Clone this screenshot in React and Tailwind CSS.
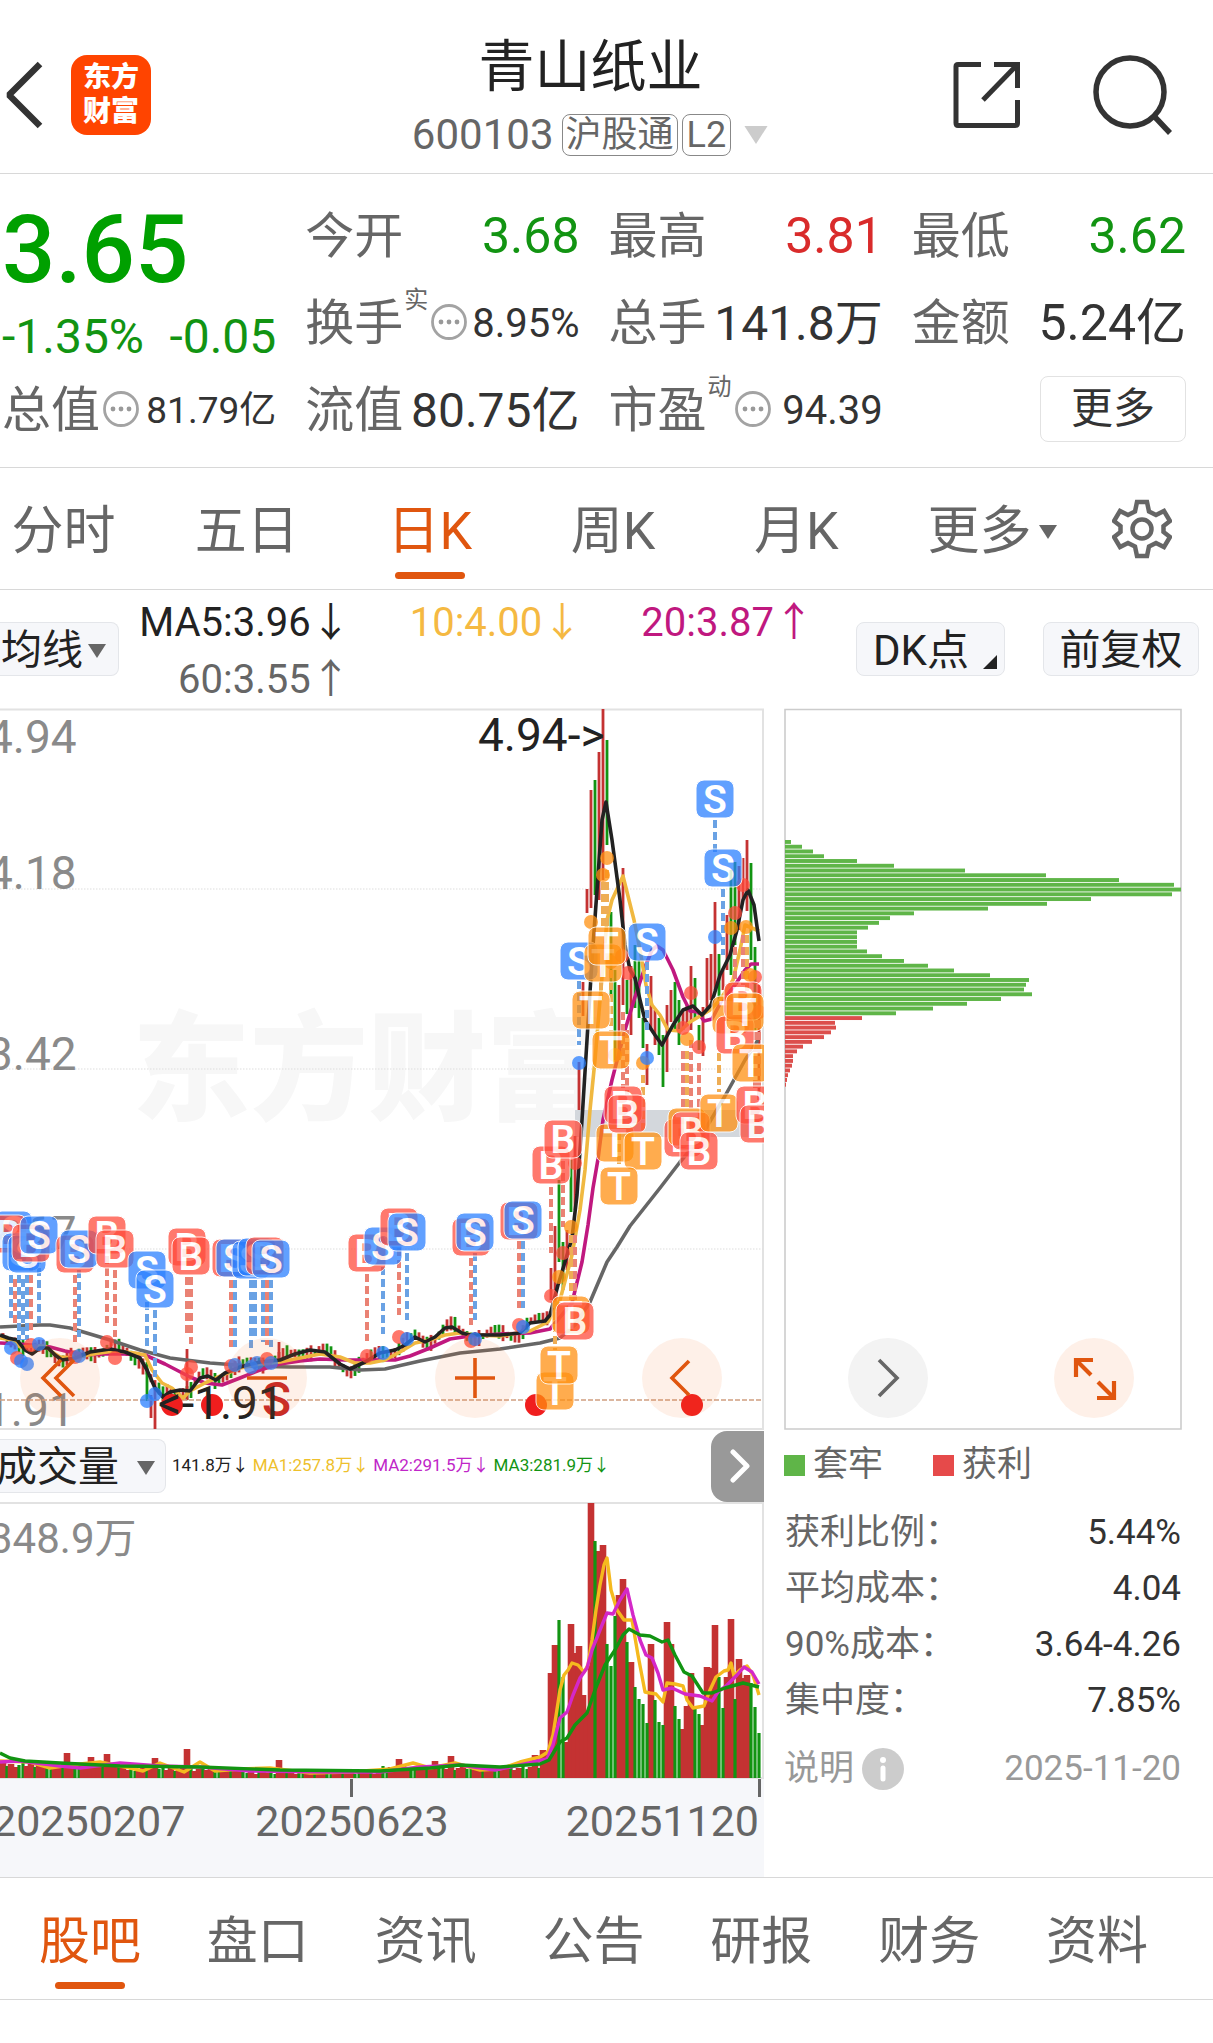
import { useState } from "react";

const PERIODS = ["分时", "五日", "日K", "周K", "月K", "更多"];
const SECTIONS = ["股吧", "盘口", "资讯", "公告", "研报", "财务", "资料"];

const COLORS = {
  up: "#c43232",
  down: "#129412",
  S: "#2a7fff",
  B: "#ff4a3a",
  T: "#ff9010",
};

const STEM_COLORS = { S: "#6aa2e4", B: "#ea8274", T: "#eead55" };

// 均线: 每一项为 [x, y]
const MA_LINES = [
  {
    color: "#666666",
    points:
      "0,1327 40,1325 50,1325 70,1328 110,1340 140,1350 170,1358 210,1363 250,1366 290,1367 330,1367 360,1370 385,1369 420,1361 460,1353 500,1349 540,1343 560,1338 575,1325 590,1302 607,1262 617,1247 630,1226 645,1207 660,1188 680,1162 700,1138 712,1118 725,1096 735,1078 745,1060 758,1040",
  },
  {
    color: "#c0187f",
    points:
      "0,1343 20,1344 50,1347 65,1351 85,1355 105,1354 125,1354 145,1355 165,1364 190,1377 205,1383 222,1385 240,1378 260,1370 280,1364 300,1361 320,1359 345,1360 370,1360 395,1360 410,1356 430,1348 450,1339 470,1336 500,1334 530,1333 550,1329 572,1303 582,1262 588,1225 593,1188 598,1159 603,1120 612,1080 625,1030 635,997 645,967 652,950 657,946 663,950 673,970 683,997 690,1011 698,1012 704,1021 712,1019 722,1000 735,985 745,970 751,964 759,964",
  },
  {
    color: "#f0b840",
    points:
      "0,1338 12,1340 20,1347 35,1346 45,1346 52,1352 60,1357 75,1358 88,1355 100,1353 115,1351 125,1352 135,1353 145,1355 152,1370 162,1383 172,1388 183,1398 190,1391 205,1383 225,1374 240,1368 260,1364 280,1362 300,1358 320,1354 340,1357 355,1363 370,1363 385,1360 400,1352 415,1343 430,1340 445,1335 460,1333 475,1335 500,1336 530,1331 548,1322 560,1300 572,1255 580,1210 585,1170 590,1110 595,1060 600,1000 607,920 612,900 623,876 634,920 640,950 646,985 652,1005 660,1015 668,1030 680,1031 690,1022 710,1010 720,1000 733,980 740,950 745,925 752,928 759,931",
  },
  {
    color: "#222222",
    points:
      "0,1335 8,1338 17,1340 25,1350 32,1354 40,1348 48,1348 55,1355 62,1360 75,1358 90,1352 110,1349 125,1352 140,1358 147,1370 155,1388 163,1397 170,1392 180,1390 190,1391 200,1378 208,1376 216,1380 225,1373 240,1367 260,1362 280,1360 295,1354 310,1350 325,1352 340,1364 350,1369 365,1362 380,1353 395,1350 405,1345 415,1337 425,1342 435,1337 445,1328 452,1327 462,1333 470,1335 500,1335 520,1333 530,1323 545,1321 550,1315 558,1285 565,1262 572,1238 577,1195 582,1120 587,1040 592,960 597,890 602,820 606,802 612,840 620,900 625,945 630,970 635,978 640,1000 645,1020 655,1035 662,1045 673,1025 683,1010 693,1006 702,1015 711,1005 720,975 730,955 737,930 743,900 748,890 754,905 759,941",
  },
];

// 拉升之后的 K 线: [x, 最高, 最低, 涨1/跌0]
const CANDLES = [
  [551, 1268, 1300, 1], [555, 1226, 1290, 1], [559, 1180, 1262, 0], [563, 1242, 1290, 0],
  [567, 1230, 1270, 1], [571, 1160, 1212, 0], [575, 1136, 1210, 1], [579, 1062, 1110, 1],
  [583, 982, 1016, 1], [587, 889, 913, 1], [591, 790, 908, 1], [595, 780, 895, 0],
  [599, 752, 900, 1], [603, 709, 880, 1], [607, 740, 845, 0], [611, 912, 1000, 0],
  [615, 970, 1060, 0], [619, 985, 1060, 1], [623, 868, 1005, 1], [627, 980, 1014, 0],
  [631, 966, 1035, 1], [635, 945, 1008, 0], [639, 960, 1018, 0], [643, 1018, 1048, 0],
  [647, 1044, 1085, 1], [651, 976, 1030, 1], [655, 1010, 1045, 1], [659, 1018, 1055, 0],
  [663, 1035, 1087, 0], [667, 1005, 1072, 1], [671, 990, 1022, 1], [675, 982, 1030, 0],
  [679, 1000, 1045, 0], [683, 1010, 1030, 1], [687, 1005, 1024, 1], [691, 966, 1030, 1],
  [695, 978, 1020, 0], [699, 1025, 1050, 0], [703, 1007, 1056, 1], [707, 958, 1010, 1],
  [711, 954, 1000, 1], [715, 902, 990, 1], [719, 954, 1000, 0], [723, 970, 990, 1],
  [727, 915, 970, 1], [731, 870, 975, 0], [735, 862, 945, 0], [739, 866, 930, 1],
  [743, 858, 900, 1], [747, 840, 911, 1], [751, 863, 960, 0], [755, 947, 1030, 0],
  [759, 985, 1100, 1],
];

// 横盘区间的 K 线, 围绕 MA5 展开
const BASE_PATH = MA_LINES[3].points
  .split(" ")
  .map((p) => p.split(",").map(Number))
  .filter(([x]) => x <= 550);

const baseAt = (x) => {
  const i = BASE_PATH.findIndex((p) => p[0] >= x);
  if (i <= 0) return BASE_PATH[0][1];
  const [x0, y0] = BASE_PATH[i - 1];
  const [x1, y1] = BASE_PATH[i];
  return y0 + ((y1 - y0) * (x - x0)) / (x1 - x0);
};

const EARLY_CANDLES = Array.from({ length: 137 }, (_, i) => {
  const x = 3 + i * 4;
  const y = baseAt(x) + Math.sin(i * 0.6) * 4;
  const size = 3 + ((i * 7) % 6);
  return [x, y - size, y + size, (i * 5) % 7 < 4 ? 1 : 0];
}).concat([
  [147, 1362, 1401, 0],
  [151, 1395, 1418, 1],
  [155, 1390, 1429, 1],
  [187, 1349, 1400, 1],
  [279, 1342, 1366, 1],
]);

// 买卖点连线: [x, 起, 止, 类型]
const STEMS = [
  [11, 1275, 1318, "S"], [15, 1279, 1323, "B"], [19, 1275, 1340, "S"], [23, 1279, 1340, "S"],
  [27, 1275, 1340, "S"], [31, 1263, 1330, "B"], [39, 1256, 1323, "S"], [75, 1275, 1342, "B"],
  [79, 1270, 1337, "S"], [107, 1256, 1323, "B"], [115, 1270, 1337, "B"], [147, 1302, 1346, "S"],
  [155, 1310, 1377, "S"], [187, 1277, 1337, "B"], [191, 1277, 1344, "B"], [231, 1280, 1347, "B"],
  [235, 1280, 1347, "S"], [251, 1280, 1348, "S"], [255, 1280, 1340, "S"], [263, 1280, 1342, "S"],
  [267, 1280, 1345, "B"], [271, 1280, 1347, "S"], [367, 1274, 1341, "B"], [383, 1267, 1334, "S"],
  [399, 1248, 1315, "B"], [407, 1253, 1320, "S"], [471, 1258, 1325, "B"], [475, 1253, 1320, "S"],
  [519, 1241, 1308, "B"], [523, 1241, 1308, "S"], [551, 1187, 1253, "B"], [563, 1161, 1227, "B"],
  [571, 1235, 1300, "T"], [575, 1235, 1300, "B"], [555, 1300, 1350, "T"], [579, 981, 1045, "S"],
  [603, 882, 928, "T"], [607, 870, 928, "T"], [601, 982, 1000, "T"], [611, 970, 1031, "T"],
  [623, 1012, 1088, "B"], [627, 1030, 1095, "B"], [619, 1120, 1166, "T"], [643, 1075, 1130, "T"],
  [647, 962, 1030, "S"], [683, 1051, 1110, "B"], [687, 1051, 1108, "T"], [691, 1040, 1110, "B"],
  [699, 1063, 1130, "B"], [719, 1053, 1092, "T"], [715, 820, 852, "S"], [723, 889, 955, "S"],
  [735, 947, 985, "B"], [743, 935, 985, "B"], [747, 935, 1000, "T"], [755, 1020, 1090, "B"],
  [759, 1020, 1105, "B"],
];

const DOTS = [
  [11, 1348, "S"], [17, 1358, "B"], [21, 1361, "S"], [27, 1364, "S"], [31, 1345, "B"],
  [39, 1344, "S"], [75, 1357, "B"], [79, 1356, "S"], [107, 1342, "B"], [115, 1358, "B"],
  [147, 1401, "S"], [155, 1394, "S"], [187, 1374, "B"], [191, 1367, "B"], [231, 1366, "B"],
  [235, 1365, "S"], [251, 1367, "S"], [257, 1363, "S"], [267, 1359, "B"], [271, 1363, "S"],
  [367, 1356, "B"], [383, 1353, "S"], [399, 1337, "B"], [407, 1339, "S"], [471, 1341, "B"],
  [475, 1339, "S"], [519, 1325, "B"], [523, 1327, "S"], [551, 1296, "B"], [559, 1277, "T"],
  [563, 1253, "B"], [571, 1227, "T"], [575, 1163, "B"], [579, 1063, "S"], [591, 922, "T"],
  [603, 875, "T"], [607, 858, "T"], [611, 962, "T"], [622, 956, "B"], [628, 973, "B"],
  [615, 1055, "T"], [643, 1063, "T"], [647, 1058, "S"], [687, 1039, "T"], [699, 1047, "B"],
  [683, 1028, "B"], [691, 993, "B"], [715, 937, "S"], [731, 928, "T"], [735, 913, "B"],
  [743, 885, "B"], [746, 927, "T"], [755, 977, "B"], [750, 975, "T"], [759, 1012, "B"],
];

const MARKERS = [
  ["S", 13, 1230], ["B", 8, 1234], ["S", 21, 1252], ["S", 27, 1254], ["B", 31, 1243],
  ["S", 39, 1235], ["B", 75, 1254], ["S", 79, 1249], ["B", 107, 1235], ["B", 115, 1249],
  ["S", 147, 1270], ["S", 155, 1289], ["B", 187, 1247], ["B", 191, 1256], ["B", 231, 1258],
  ["S", 235, 1258], ["S", 251, 1260], ["S", 257, 1257], ["B", 265, 1256], ["S", 271, 1259],
  ["B", 367, 1253], ["S", 383, 1246], ["B", 399, 1227], ["S", 407, 1232], ["B", 471, 1237],
  ["S", 475, 1232], ["B", 519, 1221], ["S", 523, 1220], ["B", 551, 1165], ["B", 563, 1139],
  ["T", 571, 1315], ["B", 575, 1321], ["T", 555, 1391], ["T", 559, 1365], ["S", 579, 961],
  ["T", 603, 963], ["T", 607, 946], ["T", 591, 1010], ["S", 647, 942], ["T", 611, 1050],
  ["T", 615, 1143], ["B", 623, 1105], ["B", 627, 1114], ["T", 643, 1151], ["T", 619, 1186],
  ["B", 683, 1138], ["T", 687, 1127], ["B", 691, 1131], ["B", 699, 1151], ["T", 719, 1113],
  ["T", 731, 1015], ["B", 735, 1035], ["B", 743, 1001], ["T", 745, 1012], ["T", 751, 1063],
  ["B", 755, 1105], ["B", 759, 1124], ["S", 715, 799], ["S", 723, 868],
];

// 成交量: [x, 顶部, 涨1/跌0]
const VOLUMES = [
  [551, 1673, 1], [555, 1645, 1], [567, 1742, 1], [571, 1624, 1], [575, 1653, 1],
  [579, 1646, 1], [583, 1695, 1], [587, 1712, 1], [591, 1503, 1], [599, 1551, 1],
  [603, 1545, 1], [619, 1595, 1], [623, 1579, 1], [631, 1662, 1], [651, 1644, 1],
  [667, 1622, 1], [671, 1644, 1], [683, 1729, 1], [687, 1706, 1], [691, 1673, 1],
  [703, 1725, 1], [707, 1667, 1], [711, 1668, 1], [715, 1625, 1], [727, 1677, 1],
  [731, 1619, 1], [739, 1659, 1], [743, 1678, 1], [747, 1675, 1], [559, 1620, 0],
  [563, 1677, 0], [595, 1541, 0], [607, 1644, 0], [611, 1666, 0], [615, 1616, 0],
  [627, 1642, 0], [635, 1687, 0], [639, 1699, 0], [643, 1704, 0], [647, 1723, 0],
  [655, 1700, 0], [659, 1722, 0], [663, 1725, 0], [675, 1706, 0], [679, 1719, 0],
  [695, 1709, 0], [699, 1714, 0], [719, 1677, 0], [723, 1708, 0], [735, 1699, 0],
  [751, 1683, 0], [755, 1707, 0], [759, 1733, 0],
];

const SPIKES = { 67: 1753, 91: 1757, 107: 1754, 155: 1758, 187: 1749, 279: 1760, 399: 1759, 435: 1761, 451: 1756, 535: 1755, 543: 1750, 547: 1752 };

const EARLY_VOLUMES = Array.from({ length: 137 }, (_, i) => {
  const x = 3 + i * 4;
  const floor = x < 120 ? 1763 : x < 240 ? 1767 : x < 380 ? 1770 : 1766;
  const up = (i * 5) % 7 < 4 || SPIKES[x] ? 1 : 0;
  return [x, SPIKES[x] || floor + ((i * 3) % 5), up];
});

const VOLUME_LINES = [
  {
    color: "#f5b91e",
    points:
      "0,1761 30,1762 50,1768 70,1765 100,1762 130,1768 143,1771 160,1763 184,1772 200,1762 215,1771 240,1769 270,1768 310,1773 350,1772 390,1769 413,1763 430,1768 455,1763 480,1770 500,1769 520,1762 540,1757 548,1752 553,1735 560,1690 564,1675 568,1670 572,1663 578,1665 584,1672 588,1665 592,1640 596,1610 600,1585 604,1565 607,1558 611,1590 617,1610 624,1620 632,1620 638,1655 645,1692 650,1693 656,1694 663,1702 667,1683 675,1684 683,1686 687,1700 693,1708 704,1706 710,1690 716,1677 724,1671 728,1670 731,1663 734,1676 740,1670 747,1666 753,1675 759,1695",
  },
  {
    color: "#d428c8",
    points:
      "0,1762 20,1761 60,1766 80,1768 120,1763 160,1766 200,1767 250,1771 330,1772 380,1772 420,1767 460,1765 495,1770 520,1765 547,1759 553,1745 560,1718 567,1712 573,1695 580,1678 587,1668 592,1650 600,1630 607,1613 613,1614 620,1600 627,1589 633,1615 640,1640 646,1655 652,1658 658,1673 663,1690 672,1688 685,1694 700,1696 712,1701 718,1692 727,1685 737,1675 744,1667 752,1672 759,1684",
  },
  {
    color: "#129412",
    points:
      "0,1753 10,1758 25,1761 60,1763 120,1766 200,1767 280,1770 380,1771 430,1768 460,1765 500,1767 540,1764 549,1760 560,1742 567,1738 575,1725 587,1713 595,1690 605,1665 615,1650 623,1635 629,1629 640,1635 650,1636 662,1642 668,1640 675,1655 684,1672 692,1676 703,1693 712,1693 725,1688 743,1683 759,1687",
  },
];

// 筹码分布
const TRAPPED = [6, 17, 28, 39, 72, 109, 180, 261, 334, 389, 396, 387, 306, 262, 203, 129, 105, 94, 83, 72, 72, 72, 72, 82, 97, 119, 143, 169, 205, 244, 241, 239, 247, 216, 182, 148, 111];
const PROFIT = [77, 50, 51, 46, 39, 27, 18, 12, 8, 8, 7, 5, 3, 2, 1];

const COSTS = [
  ["获利比例：", "5.44%"],
  ["平均成本：", "4.04"],
  ["90%成本：", "3.64-4.26"],
  ["集中度：", "7.85%"],
];

const MoreDots = () => (
  <svg className="h-9 w-9 shrink-0" viewBox="0 0 36 36" fill="none">
    <circle cx="18" cy="18" r="16.5" stroke="#a3a3a3" strokeWidth="2.8" />
    <circle cx="10" cy="18" r="2.4" fill="#999" />
    <circle cx="18" cy="18" r="2.4" fill="#999" />
    <circle cx="26" cy="18" r="2.4" fill="#999" />
  </svg>
);

const Caret = ({ className }) => (
  <svg className={className} viewBox="0 0 18 14">
    <path d="M0 0H18L9 14Z" fill="currentColor" />
  </svg>
);

const Quote = ({ label, sup, dots, value, className = "text-5xl text-[#333]" }) => (
  <div className="flex h-[87px] items-center">
    <span className="text-[49px] text-[#666]">{label}</span>
    {sup && <span className="mt-2 ml-px self-start text-2xl leading-6 text-[#666]">{sup}</span>}
    {dots && (
      <span className="mb-1 ml-[3px]">
        <MoreDots />
      </span>
    )}
    <span className={`ml-auto ${className}`}>{value}</span>
  </div>
);

const RoundButton = ({ label, className = "bg-[#f26a1b]/10 text-[#e0560f]", children }) => (
  <button aria-label={label} className={`flex h-20 w-20 items-center justify-center rounded-full ${className}`}>
    <svg className="h-20 w-20" viewBox="0 0 80 80" fill="none" stroke="currentColor" strokeWidth="3.6">
      {children}
    </svg>
  </button>
);

const Header = () => (
  <header className="flex h-[174px] items-center justify-between border-b border-[#d8d8d8] pt-4 pr-10 pl-1">
    <div className="flex w-[306px] items-center gap-[27px]">
      <button aria-label="返回">
        <svg className="h-[68px] w-10" viewBox="0 0 40 68" fill="none" stroke="#333" strokeWidth="6.500" strokeLinejoin="bevel">
          <path d="M36 3L5 34L36 65" />
        </svg>
      </button>
      <div className="flex h-20 w-20 flex-col items-center justify-center rounded-2xl bg-[#ff4400] text-[28px] leading-[34px] font-black text-white">
        <span>东方</span>
        <span>财富</span>
      </div>
    </div>
    <div className="flex flex-col items-center pt-2 pl-1">
      <h1 className="text-[56px] leading-[72px] text-[#222]">青山纸业</h1>
      <div className="flex h-[64px] items-center gap-1 text-[#666]">
        <span className="text-[42px]">600103</span>
        <span className="ml-1 flex h-[42px] items-center rounded-lg border border-[#888] px-[3px] text-4xl">沪股通</span>
        <span className="flex h-[42px] items-center rounded-lg border border-[#888] px-1 text-4xl">L2</span>
        <Caret className="ml-2 h-[18px] w-[26px] text-[#ccc]" />
      </div>
    </div>
    <div className="flex w-[306px] items-center justify-end gap-[72px]">
      <button aria-label="分享">
        <svg className="h-[68px] w-[68px]" viewBox="0 0 68 68" fill="none" stroke="#333" strokeWidth="5">
          <path d="M28 3.500H5Q3 3.500 3 5.500V62Q3 64.500 5 64.500H62Q64.500 64.500 64.500 62V39" />
          <path d="M41 3.500H64.500V27" />
          <path d="M64 4L30 39" />
        </svg>
      </button>
      <button aria-label="搜索">
        <svg className="h-20 w-20" viewBox="0 0 80 80" fill="none" stroke="#333" strokeWidth="5.500">
          <circle cx="37" cy="37" r="34" />
          <path d="M60 60L77 78" />
        </svg>
      </button>
    </div>
  </header>
);

const KLineChart = () => (
  <div className="relative">
    <svg className="block h-auto w-full" viewBox="0 708 764 722" fontFamily="Roboto, 'Noto Sans CJK SC', sans-serif">
      <text x="132" y="1111" fontSize="118" fontWeight="900" fill="#f7f7f7">
        东方财富
      </text>
      <path d="M575 1110H762V1137H575Z" fill="#d3d7dc" />
      <path d="M0 709.500H763V1429H0" fill="none" stroke="#e2e2e2" strokeWidth="2" />
      <path d="M0 889H763M0 1069H763M0 1249H763" stroke="#ddd" strokeWidth="1.200" strokeDasharray="1.500 1.500" />
      <g fontSize="46" fill="#8a8a8a">
        <text x="-13" y="753">4.94</text>
        <text x="-13" y="889">4.18</text>
        <text x="-13" y="1070">3.42</text>
        <text x="-13" y="1249">2.67</text>
        <text x="-15" y="1426">1.91</text>
      </g>
      {[...EARLY_CANDLES, ...CANDLES].map(([x, high, low, up], i) => (
        <path key={i} d={`M${x} ${high}V${low}`} stroke={up ? COLORS.up : COLORS.down} strokeWidth="2.800" />
      ))}
      <path d="M0 1400H763" stroke="#cf9f80" strokeWidth="1.600" strokeDasharray="5 2" />
      {MA_LINES.map((line) => (
        <polyline key={line.color} points={line.points} fill="none" stroke={line.color} strokeWidth="3.600" strokeLinejoin="round" />
      ))}
      <g fill="#f01e1e">
        <circle cx="172" cy="1405" r="11" />
        <circle cx="212" cy="1405" r="11" />
        <circle cx="536" cy="1405" r="11" />
        <circle cx="692" cy="1405" r="11" />
      </g>
      {STEMS.map(([x, from, to, type], i) => (
        <path key={i} d={`M${x} ${from}V${to}`} stroke={STEM_COLORS[type]} strokeWidth="4" strokeDasharray="8 4" />
      ))}
      {DOTS.map(([x, y, type], i) => (
        <circle key={i} cx={x} cy={y} r="7" fill={COLORS[type]} fillOpacity="0.75" />
      ))}
      {MARKERS.map(([type, x, y], i) => (
        <g key={i} opacity="0.84">
          <rect x={x - 19} y={y - 19} width="38" height="38" rx="8" fill={COLORS[type]} fillOpacity="0.88" stroke="#fff" strokeWidth="1" />
          <text x={x} y={y + 14} textAnchor="middle" fontSize="39" fontWeight="600" fill="#fff">
            {type}
          </text>
        </g>
      ))}
      <text x="262" y="1416" fontSize="48" fontWeight="500" fill="#c62828">
        S
      </text>
      <g fontSize="46" fill="#222">
        <text x="478" y="751">4.94-&gt;</text>
        <text x="158" y="1419">&lt;-1.91</text>
      </g>
    </svg>
    <div className="absolute inset-x-0 bottom-3 flex justify-between pr-[42px] pl-5">
      <RoundButton label="最左">
        <path d="M41 22L23 40L41 58M54 22L36 40L54 58" />
      </RoundButton>
      <RoundButton label="缩小">
        <path d="M20 40H60" />
      </RoundButton>
      <RoundButton label="放大">
        <path d="M20 40H60M40 20V60" />
      </RoundButton>
      <RoundButton label="左移">
        <path d="M47 23L30 40L47 57" />
      </RoundButton>
    </div>
  </div>
);

const VolumeChart = () => (
  <svg className="block h-auto w-full" viewBox="0 1502 764 277" fontFamily="Roboto, 'Noto Sans CJK SC', sans-serif">
    <path d="M0 1503H763V1778H0" fill="none" stroke="#e2e2e2" strokeWidth="2" />
    <text x="-11" y="1553" fontSize="42" fill="#8a8a8a">
      348.9万
    </text>
    {[...EARLY_VOLUMES, ...VOLUMES].map(([x, top, up], i) => (
      <path key={i} d={`M${x} ${top}V1778`} stroke={up ? COLORS.up : COLORS.down} strokeWidth={up ? 6.6 : 3.2} />
    ))}
    {VOLUME_LINES.map((line) => (
      <polyline key={line.color} points={line.points} fill="none" stroke={line.color} strokeWidth="3.400" strokeLinejoin="round" />
    ))}
  </svg>
);

const ChipPanel = () => (
  <aside className="pr-[31px] pl-5">
    <div className="relative">
      <svg className="block h-auto w-full" viewBox="784 708 398 722">
        <path d="M785 709.500H1181V1429H785Z" fill="none" stroke="#ccc" strokeWidth="1.600" />
        {[...TRAPPED, ...PROFIT].map((width, i) => (
          <rect
            key={i}
            x="785"
            y={840 + i * 4.76}
            width={width}
            height="3.9"
            fill={i < TRAPPED.length ? "#5fb548" : "#dc4f4c"}
          />
        ))}
      </svg>
      <div className="absolute inset-x-0 bottom-3 flex justify-between pr-12 pl-16">
        <RoundButton label="右移" className="bg-[#f3f3f3] text-[#666]">
          <path d="M31 22L49 40L31 58" />
        </RoundButton>
        <RoundButton label="全屏">
          <path d="M39 22H22V39M22 22L37 37M43 60H60V43M60 60L44 44" strokeWidth="4.200" />
        </RoundButton>
      </div>
    </div>
    <div className="flex h-[70px] items-center text-[35px] text-[#666]">
      <i className="mr-2 h-[21px] w-[21px] bg-[#5fb548]" />
      套牢
      <i className="mr-2 ml-[50px] h-[21px] w-[21px] bg-[#e64a4a]" />
      获利
    </div>
    <dl className="mt-[5px] text-[35px] leading-[56px]">
      {COSTS.map(([label, value]) => (
        <div key={label} className="flex justify-between">
          <dt className="pl-px whitespace-nowrap text-[#666]">{label}</dt>
          <dd className="pr-px text-[#333]">{value}</dd>
        </div>
      ))}
    </dl>
    <div className="mt-[14px] flex items-center justify-between text-[35px] leading-[52px] text-[#999]">
      <button className="flex items-center gap-2">
        说明
        <svg className="h-[42px] w-[42px]" viewBox="0 0 42 42">
          <circle cx="21" cy="21" r="21" fill="#ccc" />
          <circle cx="21" cy="12" r="3" fill="#fff" />
          <path d="M21 20V31" stroke="#fff" strokeWidth="5" strokeLinecap="round" />
        </svg>
      </button>
      <span className="pr-px">2025-11-20</span>
    </div>
  </aside>
);

const App = () => {
  const [period, setPeriod] = useState("日K");
  const [section, setSection] = useState("股吧");

  return (
    <div className="flex h-screen flex-col overflow-hidden bg-white font-['Roboto','Noto_Sans_CJK_SC',sans-serif] *:shrink-0">
      <Header />

      {/* 行情数据 */}
      <section className="grid grid-cols-4 border-b border-[#d8d8d8] pt-[19px] pb-[13px] *:pr-[27px] *:pl-[2px]">
        <div className="whitespace-nowrap">
          <div className="text-[94px] leading-[114px] font-medium text-[#00a000]">3.65</div>
          <div className="flex h-[60px] items-center justify-between text-5xl text-[#129412]">
            <span>-1.35%</span>
            <span>-0.05</span>
          </div>
          <Quote label="总值" dots value="81.79亿" className="text-[37px] text-[#333]" />
        </div>
        <div className="whitespace-nowrap">
          <Quote label="今开" value="3.68" className="text-[50px] text-[#129412]" />
          <Quote label="换手" sup="实" dots value="8.95%" className="text-[40px] text-[#333]" />
          <Quote label="流值" value="80.75亿" />
        </div>
        <div className="whitespace-nowrap">
          <Quote label="最高" value="3.81" className="text-[50px] text-[#d92b2b]" />
          <Quote label="总手" value="141.8万" />
          <Quote label="市盈" sup="动" dots value="94.39" className="text-[40px] text-[#333]" />
        </div>
        <div className="whitespace-nowrap">
          <Quote label="最低" value="3.62" className="text-[50px] text-[#129412]" />
          <Quote label="金额" value="5.24亿" className="text-[50px] text-[#333]" />
          <div className="flex h-[84px] items-center justify-end">
            <button className="h-[66px] w-[146px] rounded-lg border border-[#e2e2e2] text-[42px] leading-[62px] text-[#333]">更多</button>
          </div>
        </div>
      </section>

      {/* 周期切换 */}
      <nav className="flex h-[122px] border-b border-[#d8d8d8] text-[52px]">
        <div className="-ml-7 grid flex-1 grid-cols-6">
          {PERIODS.map((item) => (
            <button
              key={item}
              onClick={() => setPeriod(item)}
              className={`relative flex items-center justify-center pt-[6px] ${period === item ? "text-[#e0560f]" : "text-[#666]"}`}
            >
              {item}
              {item === "更多" && <Caret className="absolute right-[14px] h-[14px] w-[18px]" />}
              {period === item && <i className="absolute bottom-[10px] h-[7px] w-[70px] rounded-full bg-[#e0560f]" />}
            </button>
          ))}
        </div>
        <button aria-label="设置" className="flex w-[142px] items-center justify-center">
          <svg className="h-[60px] w-[60px]" viewBox="0 0 60 60" fill="none" stroke="#666" strokeWidth="4.500">
            <path d="M25 3H35L37 12.500L44 16L52 12L58 22L51.500 27V33L58 38L52 48L44 44L37 47.500L35 57H25L23 47.500L16 44L8 48L2 38L8.500 33V27L2 22L8 12L16 16L23 12.500Z" />
            <circle cx="30" cy="30" r="9.500" />
          </svg>
        </button>
      </nav>

      {/* 均线指标 */}
      <section className="flex h-[118px] items-center whitespace-nowrap">
        <button className="flex h-[54px] w-[119px] items-center gap-[5px] rounded-r-lg border border-l-0 border-[#e4e6ea] bg-[#f6f7fa] pt-[3px] pl-px text-[41px] text-[#222]">
          均线
          <Caret className="h-[14px] w-[18px] text-[#666]" />
        </button>
        <div className="grid w-[695px] grid-cols-3 self-start pt-1 text-right text-[40px] leading-[57px] text-[#666] *:h-[57px]">
          <span className="text-[#222]">MA5:3.96↓</span>
          <span className="text-[#f5b942]">10:4.00↓</span>
          <span className="text-[#c0187f]">20:3.87↑</span>
          <span>60:3.55↑</span>
        </div>
        <button className="relative ml-auto flex h-[54px] w-[149px] items-center rounded-lg border border-[#e4e6ea] bg-[#f6f7fa] pt-[3px] pl-4 text-[42px] text-[#222]">
          DK点
          <svg className="absolute right-[7px] bottom-[6px] h-[14px] w-[14px]" viewBox="0 0 14 14">
            <path d="M14 0V14H0Z" fill="#222" />
          </svg>
        </button>
        <button className="mr-[14px] ml-[38px] flex h-[54px] w-[156px] items-center justify-center rounded-lg border border-[#e4e6ea] bg-[#f6f7fa] pt-[3px] text-[41px] text-[#222]">
          前复权
        </button>
      </section>

      <main className="grid grid-cols-[764fr_449fr]">
        <div className="flex flex-col overflow-hidden">
          <KLineChart />
          <div className="flex h-[72px] items-center whitespace-nowrap">
            <button className="flex h-[54px] w-[166px] items-center justify-between rounded-r-lg border border-l-0 border-[#e4e6ea] bg-[#f6f7fa] pt-[3px] pr-[10px] text-[41px] text-[#222]">
              <span className="-ml-1">成交量</span>
              <Caret className="h-[14px] w-[18px] text-[#666]" />
            </button>
            <div className="flex gap-1 pl-[6px] text-[17px]">
              <span className="text-[#222]">141.8万↓</span>
              <span className="text-[#eec02c]">MA1:257.8万↓</span>
              <span className="text-[#c026c8]">MA2:291.5万↓</span>
              <span className="text-[#129412]">MA3:281.9万↓</span>
            </div>
            <button aria-label="展开" className="ml-auto flex h-[71px] w-[53px] items-center justify-center rounded-l-2xl bg-[#999]">
              <svg className="ml-1 h-9 w-5" viewBox="0 0 20 36" fill="none" stroke="#fff" strokeWidth="5" strokeLinecap="round" strokeLinejoin="round">
                <path d="M3 4L17 18L3 32" />
              </svg>
            </button>
          </div>
          <VolumeChart />
          <div className="relative flex h-[98px] bg-[#f6f7fa] pt-[14px] pr-[5px] text-[43px] leading-[56px] text-[#666]">
            <i className="absolute top-0 left-[350px] h-[18px] w-[3px] bg-[#666]" />
            <i className="absolute top-0 right-[3px] h-[18px] w-[3px] bg-[#666]" />
            <span className="mr-[70px] -ml-2">20250207</span>
            <span>20250623</span>
            <span className="ml-auto">20251120</span>
          </div>
        </div>
        <ChipPanel />
      </main>

      {/* 底部栏目 */}
      <nav className="grid h-[123px] grid-cols-7 border-y border-[#d8d8d8] pr-8 pl-[6px] text-[51px]">
        {SECTIONS.map((item) => (
          <button
            key={item}
            onClick={() => setSection(item)}
            className={`relative flex items-center justify-center pt-2 ${section === item ? "text-[#e0560f]" : "text-[#666]"}`}
          >
            {item}
            {section === item && <i className="absolute bottom-[10px] h-[7px] w-[70px] rounded-full bg-[#e0560f]" />}
          </button>
        ))}
      </nav>
    </div>
  );
};

export default App;
